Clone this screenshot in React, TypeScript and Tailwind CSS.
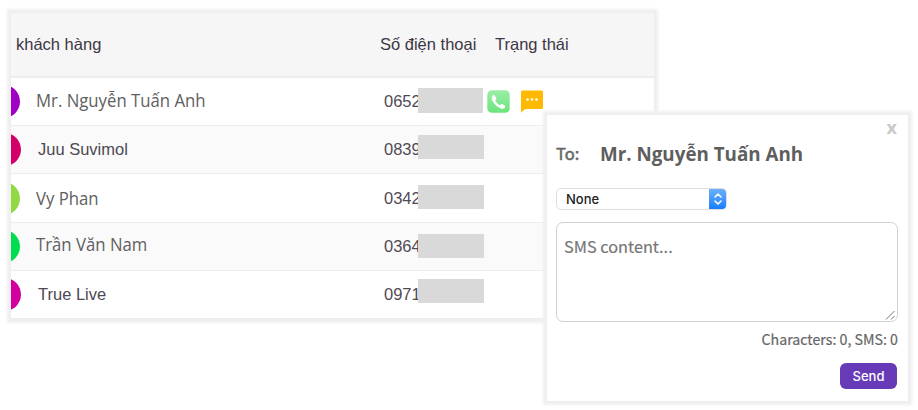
type Customer = {
  name: string;
  phone: string;
  row: string;
  avatar: string;
  label: string;
  mask: string;
  actions?: boolean;
};

const customers: Customer[] = [
  {
    name: 'Mr. Nguyễn Tuấn Anh',
    phone: '0652',
    row: 'h-12 bg-white',
    avatar: 'bg-[#a100c2] -ml-6',
    label: "ml-4 pb-0.5 text-[18px] origin-left scale-x-[.93] text-[#606060] font-['Open_Sans',sans-serif]",
    mask: 'w-[65px] h-[25px] mb-0.5',
    actions: true,
  },
  {
    name: 'Juu Suvimol',
    phone: '0839',
    row: 'h-12 bg-[#fafafa]',
    avatar: 'bg-[#d4006a] -ml-[23px]',
    label: 'ml-[17px] text-[16.5px] text-[#4d4852]',
    mask: 'w-[66px] h-6 mb-[5px]',
  },
  {
    name: 'Vy Phan',
    phone: '0342',
    row: 'h-[49px] bg-white',
    avatar: 'bg-[#92d844] -ml-6',
    label: "ml-4 text-[18px] origin-left scale-x-[.93] text-[#606060] font-['Open_Sans',sans-serif]",
    mask: 'w-[66px] h-6 mb-0.5',
  },
  {
    name: 'Trần Văn Nam',
    phone: '0364',
    row: 'h-12 bg-[#fafafa]',
    avatar: 'bg-[#00dc50] -ml-6',
    label: "ml-4 pb-1 text-[18px] origin-left scale-x-[.93] text-[#606060] font-['Open_Sans',sans-serif]",
    mask: 'w-[66px] h-6 mb-0.5',
  },
  {
    name: 'True Live',
    phone: '0971',
    row: 'h-12 bg-white',
    avatar: 'bg-[#d2009c] -ml-[23px]',
    label: 'ml-[17px] text-[16.5px] text-[#4d4852]',
    mask: 'w-[66px] h-6 mb-[7px]',
  },
];

export default function App() {
  return (
    <div className="relative w-[918px] h-[410px] overflow-hidden bg-white pl-[11px] pt-[13px] font-['Liberation_Sans',Arial,sans-serif]">
      <CustomerTable />
      <SmsDialog />
    </div>
  );
}

function CustomerTable() {
  return (
    <div className="w-[643px] shadow-[0_0_3px_4px_#efefef]">
      <div className="overflow-hidden">
        <div className="flex items-center h-[65px] border-b-2 border-[#ededed] bg-[#f6f6f6] text-[16.5px] text-[#3d3744]">
          <span className="w-[369px] pl-[5px]">khách hàng</span>
          <span className="w-[115px]">Số điện thoại</span>
          <span>Trạng thái</span>
        </div>
        {customers.map((customer) => (
          <CustomerRow key={customer.name} customer={customer} />
        ))}
      </div>
    </div>
  );
}

function CustomerRow({ customer }: { customer: Customer }) {
  return (
    <div className={`flex items-center border-b border-[#ededed] ${customer.row}`}>
      <div className="flex items-center w-[373px]">
        <span className={`size-[33px] shrink-0 rounded-full ${customer.avatar}`} />
        <span className={`whitespace-nowrap ${customer.label}`}>{customer.name}</span>
      </div>
      {/* the mask covers the rest of the number */}
      <span className="w-[34px] text-[16.5px] text-[#504a55]">{customer.phone}</span>
      <span className={`relative bg-[#d9d9d9] ${customer.mask}`} />
      {customer.actions && (
        <div className="flex gap-[11px] pl-1">
          <PhoneIcon />
          <MessageIcon />
        </div>
      )}
    </div>
  );
}

function SmsDialog() {
  return (
    <div className="absolute left-[547px] top-[115px] flex flex-col w-[361px] h-[286px] bg-white pl-[9px] pr-2.5 shadow-[0_0_3px_4px_#efefef] font-['Noto_Sans_CJK_SC',sans-serif] text-[#666]">
      <button className="self-end h-6 pr-px font-['Open_Sans',sans-serif] text-[18px] leading-[21px] font-bold text-[#c9c9c9]">x</button>
      <div className="flex items-center h-[30px]">
        <span className="w-[44px] pb-0.5 text-[16.5px] [-webkit-text-stroke:0.5px]">To:</span>
        <span className="whitespace-nowrap font-['Open_Sans',sans-serif] text-[18.8px] font-bold text-[#5e5e5e]">Mr. Nguyễn Tuấn Anh</span>
      </div>
      <div className="flex justify-between mt-[19px] w-[171px] h-[22px] rounded-[5px] border border-[#dedede] overflow-hidden">
        <span className="pl-[9px] font-['Inter',sans-serif] text-[13px] leading-5 font-medium text-[#222]">None</span>
        <span className="flex items-center justify-center -my-px -mr-px w-[18px] bg-linear-to-b from-[#6cb3fa] to-[#0a7aff]">
          <svg width="10" height="14" viewBox="0 0 10 14" fill="none" stroke="#fff" strokeWidth="1.6" strokeLinecap="round" strokeLinejoin="round">
            <path d="M2 5 5 2l3 3M2 9l3 3 3-3" />
          </svg>
        </span>
      </div>
      <div className="flex items-start justify-between mt-3 h-[100px] rounded-[7px] border border-[#cfcfcf] pl-[7px]">
        <span className="mt-[11px] text-[16.3px] leading-6 text-[#777] [-webkit-text-stroke:0.2px]">SMS content...</span>
        <svg className="self-end" width="12" height="12" viewBox="0 0 12 12" stroke="#777" strokeWidth="1">
          <path d="M1 10.5 9.5 2M6 10.5 9.5 7" />
        </svg>
      </div>
      <p className="mt-[5px] text-right text-[14.2px] leading-6 [-webkit-text-stroke:0.2px]">Characters: 0, SMS: 0</p>
      <button className="self-end mt-3 mr-px w-[57px] h-[26px] pt-0.5 rounded-md bg-[#673ab7] font-['Inter',sans-serif] text-[13px] font-medium text-white">
        Send
      </button>
    </div>
  );
}

function PhoneIcon() {
  return (
    <svg width="23" height="23" viewBox="0 0 23 23">
      <defs>
        <linearGradient id="call" x1="0" y1="0" x2="0" y2="1">
          <stop offset="0" stopColor="#9aeda6" />
          <stop offset="1" stopColor="#6be57b" />
        </linearGradient>
      </defs>
      <rect x=".3" y=".3" width="22.4" height="22.4" rx="4.5" fill="url(#call)" />
      <path
        d="M5.3 5.8c.5-.8 1.5-1.2 2.2-.5l1.7 2.6c.4.7.1 1.2-.4 1.6-.7.6-.6 1.1-.2 1.8.9 1.5 2 2.6 3.4 3.5.7.4 1.2.4 1.7-.2.5-.6 1-.9 1.7-.5l2.5 1.7c.8.6.5 1.5-.2 2.1-1 .9-2.4 1-3.8.5-4-1.5-7.3-4.7-8.9-8.7-.5-1.4-.5-2.7.3-3.9z"
        fill="#fff"
      />
    </svg>
  );
}

function MessageIcon() {
  return (
    <svg width="22" height="23" viewBox="0 0 22 23">
      <path d="M1.5.5h19A1.5 1.5 0 0 1 22 2v15.500a1.5 1.5 0 0 1-1.5 1.5H4.2L0 22.7V2A1.5 1.5 0 0 1 1.5.5z" fill="#ffb900" />
      <circle cx="6.5" cy="9.5" r="1.3" fill="#fff" />
      <circle cx="11" cy="9.5" r="1.3" fill="#fff" />
      <circle cx="15.5" cy="9.5" r="1.3" fill="#fff" />
    </svg>
  );
}
